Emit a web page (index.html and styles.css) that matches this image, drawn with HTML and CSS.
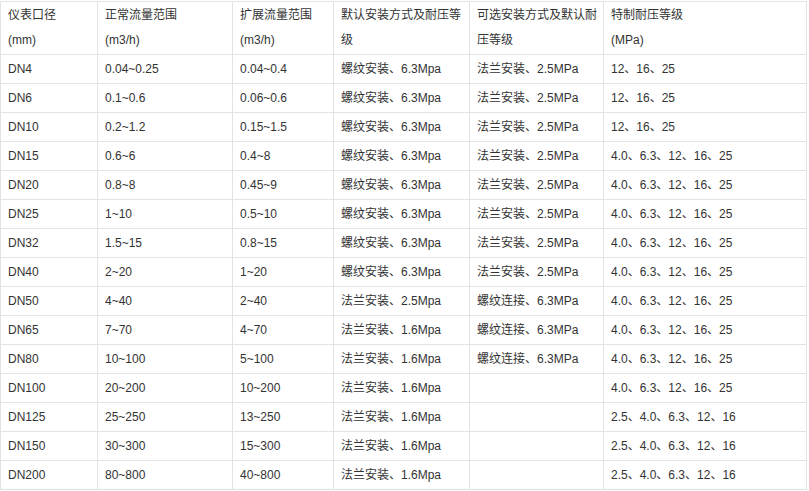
FILE: index.html
```html
<!DOCTYPE html>
<html lang="zh">
<head>
<meta charset="utf-8">
<link rel="stylesheet" href="styles.css">
</head>
<body>
<div class="wrap">
<table class="spec">
<colgroup>
<col class="c1"><col class="c2"><col class="c3"><col class="c4"><col class="c5"><col class="c6">
</colgroup>
<thead>
<tr class="head">
<td>仪表口径<br>(mm)</td>
<td>正常流量范围<br>(m3/h)</td>
<td>扩展流量范围<br>(m3/h)</td>
<td>默认安装方式及耐压等<br>级</td>
<td>可选安装方式及默认耐<br>压等级</td>
<td>特制耐压等级<br>(MPa)</td>
</tr>
</thead>
<tbody>
<tr><td>DN4</td><td>0.04~0.25</td><td>0.04~0.4</td><td>螺纹安装、6.3Mpa</td><td>法兰安装、2.5MPa</td><td>12、16、25</td></tr>
<tr><td>DN6</td><td>0.1~0.6</td><td>0.06~0.6</td><td>螺纹安装、6.3Mpa</td><td>法兰安装、2.5MPa</td><td>12、16、25</td></tr>
<tr><td>DN10</td><td>0.2~1.2</td><td>0.15~1.5</td><td>螺纹安装、6.3Mpa</td><td>法兰安装、2.5MPa</td><td>12、16、25</td></tr>
<tr><td>DN15</td><td>0.6~6</td><td>0.4~8</td><td>螺纹安装、6.3Mpa</td><td>法兰安装、2.5MPa</td><td>4.0、6.3、12、16、25</td></tr>
<tr><td>DN20</td><td>0.8~8</td><td>0.45~9</td><td>螺纹安装、6.3Mpa</td><td>法兰安装、2.5MPa</td><td>4.0、6.3、12、16、25</td></tr>
<tr><td>DN25</td><td>1~10</td><td>0.5~10</td><td>螺纹安装、6.3Mpa</td><td>法兰安装、2.5MPa</td><td>4.0、6.3、12、16、25</td></tr>
<tr><td>DN32</td><td>1.5~15</td><td>0.8~15</td><td>螺纹安装、6.3Mpa</td><td>法兰安装、2.5MPa</td><td>4.0、6.3、12、16、25</td></tr>
<tr><td>DN40</td><td>2~20</td><td>1~20</td><td>螺纹安装、6.3Mpa</td><td>法兰安装、2.5MPa</td><td>4.0、6.3、12、16、25</td></tr>
<tr><td>DN50</td><td>4~40</td><td>2~40</td><td>法兰安装、2.5Mpa</td><td>螺纹连接、6.3MPa</td><td>4.0、6.3、12、16、25</td></tr>
<tr><td>DN65</td><td>7~70</td><td>4~70</td><td>法兰安装、1.6Mpa</td><td>螺纹连接、6.3MPa</td><td>4.0、6.3、12、16、25</td></tr>
<tr><td>DN80</td><td>10~100</td><td>5~100</td><td>法兰安装、1.6Mpa</td><td>螺纹连接、6.3MPa</td><td>4.0、6.3、12、16、25</td></tr>
<tr><td>DN100</td><td>20~200</td><td>10~200</td><td>法兰安装、1.6Mpa</td><td></td><td>4.0、6.3、12、16、25</td></tr>
<tr><td>DN125</td><td>25~250</td><td>13~250</td><td>法兰安装、1.6Mpa</td><td></td><td>2.5、4.0、6.3、12、16</td></tr>
<tr><td>DN150</td><td>30~300</td><td>15~300</td><td>法兰安装、1.6Mpa</td><td></td><td>2.5、4.0、6.3、12、16</td></tr>
<tr><td>DN200</td><td>80~800</td><td>40~800</td><td>法兰安装、1.6Mpa</td><td></td><td>2.5、4.0、6.3、12、16</td></tr>
</tbody>
</table>
</div>
</body>
</html>
```

FILE: styles.css
```css
html, body {
  margin: 0;
  padding: 0;
  background: #ffffff;
}
.wrap {
  padding: 1px 0 0 0;
}
.spec {
  border-collapse: collapse;
  table-layout: fixed;
  width: 806px;
  font-family: "Liberation Sans", Arial, "Noto Sans CJK SC", sans-serif;
  font-size: 12px;
  color: #333333;
}
.c1 { width: 97px; }
.c2 { width: 135px; }
.c3 { width: 101px; }
.c4 { width: 136px; }
.c5 { width: 134px; }
.c6 { width: 203px; }
.spec td {
  border: 1px solid #e3e3e3;
  padding: 2px 6px 2px 7px;
  line-height: 24px;
  height: 24px;
  vertical-align: middle;
  white-space: nowrap;
  overflow: hidden;
}
.head td {
  line-height: 25px;
  padding-top: 1px;
  padding-bottom: 1px;
  vertical-align: top;
}
```
